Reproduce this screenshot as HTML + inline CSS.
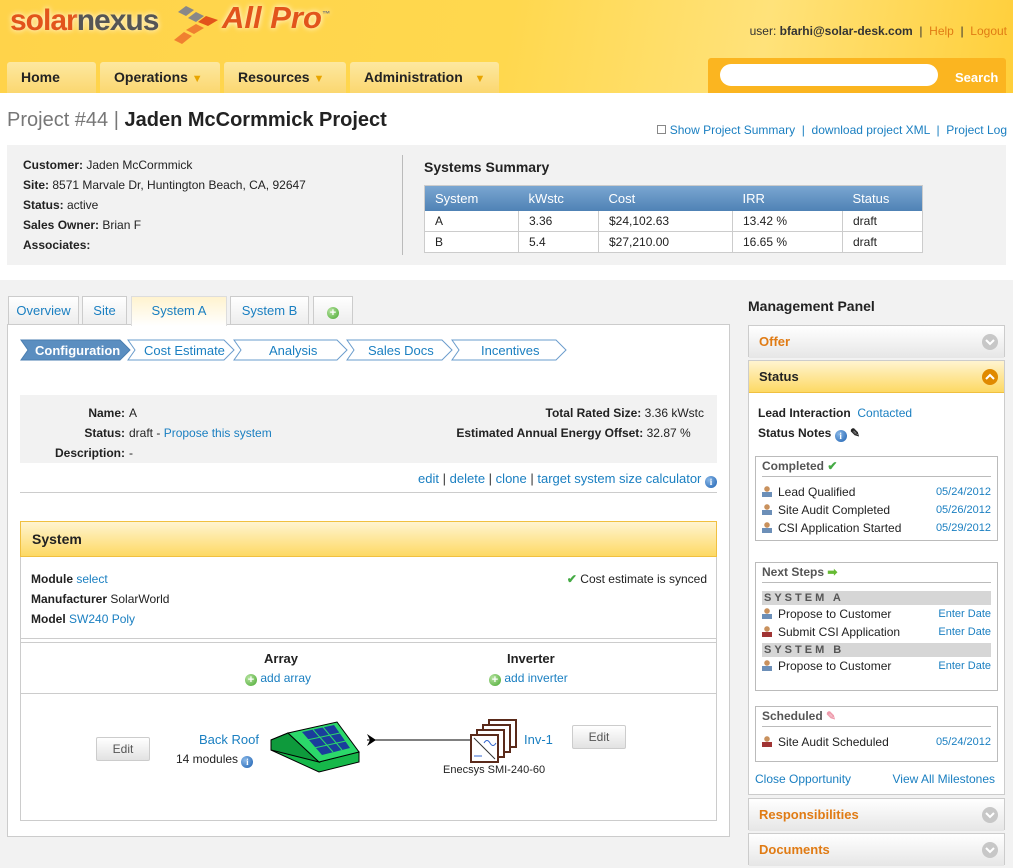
<!DOCTYPE html>
<html><head><meta charset="utf-8"><style>
*{margin:0;padding:0;box-sizing:border-box}
body{width:1013px;height:868px;overflow:hidden;background:#f2f2f2;font-family:"Liberation Sans",Arial,sans-serif;font-size:12px;color:#222;position:relative}
a{color:#1a7fc1;text-decoration:none}
.abs{position:absolute}
.hdr{left:0;top:0;width:1013px;height:93px;background:linear-gradient(100deg,#ffd34a 0%,#ffd84e 50%,#ffe27a 75%,#ffcf3a 100%)}
.nav{top:62px;height:31px;background:linear-gradient(#fde8a0,#fbd770);border-radius:3px 3px 0 0;font-weight:bold;font-size:14px;color:#222;line-height:31px;padding-left:14px}
.tri{color:#e8a500;font-size:11px}
.tab{top:296px;height:29px;border:1px solid #ccc;border-bottom:none;background:linear-gradient(#fff,#ececec);color:#1a7fc1;font-size:13px;line-height:28px;text-align:center}
.mp{left:748px;width:257px;border:1px solid #ccc}
.mph{height:32px;background:linear-gradient(#fff,#e6e6e6);font-weight:bold;font-size:13px;color:#e07b14;line-height:31px;padding-left:10px}
.circ{position:absolute;right:6px;top:8px;width:16px;height:16px;border-radius:50%;background:#c7c7c7}
.circ svg{position:absolute;left:3px;top:4px}
.box{position:absolute;left:6px;width:243px;border:1px solid #bbb;background:#fff}
.bt{margin:0 6px;border-bottom:1px solid #bbb;height:20px;line-height:19px;font-weight:bold;color:#555}
.row{height:18px;line-height:18px;padding-left:6px;position:relative;font-size:12px}
.row .d{position:absolute;right:6px;top:0;color:#1a7fc1;font-size:11px}
.p{display:inline-block;width:10px;height:11px;margin-right:6px;vertical-align:-1px;background:radial-gradient(circle at 5px 3px,#c9915d 2.5px,transparent 3px),linear-gradient(transparent 6px,#6c8fb8 6px)}
.p.r{background:radial-gradient(circle at 5px 3px,#c9915d 2.5px,transparent 3px),linear-gradient(transparent 6px,#a03434 6px)}
.sys{margin:2px 6px 0;height:14px;background:#d6d6d6;font-weight:bold;color:#555;font-size:11px;letter-spacing:3px;line-height:14px;padding-left:2px}
.info{display:inline-block;width:12px;height:12px;border-radius:50%;background:radial-gradient(circle at 4px 4px,#8ab8e8,#1a5fb0);color:#fff;font-size:9px;font-weight:bold;text-align:center;line-height:12px;vertical-align:-2px;font-family:"Liberation Serif",serif}
.plus{display:inline-block;width:12px;height:12px;border-radius:50%;background:radial-gradient(circle at 4px 4px,#b6e3a0,#47a82f);color:#fff;font-size:11px;font-weight:bold;text-align:center;line-height:12px;vertical-align:-1px}
.btn{border:1px solid #ccc;background:linear-gradient(#fff,#e2e2e2);border-radius:2px;width:54px;height:24px;text-align:center;line-height:22px;color:#555;font-size:12px}
td,th{height:21px;padding-left:10px;text-align:left;font-size:12px}
</style></head><body>
<div class="abs hdr"></div>
<div class="abs" style="left:10px;top:4px;font-size:30px;font-weight:bold;letter-spacing:-1px;color:#e2541b;text-shadow:0 0 6px #fff">solar<span style="color:#555">nexus</span></div>
<svg class="abs" style="left:168px;top:4px" width="56" height="44" viewBox="0 0 56 44"><path d="M10 8l8-6 8 4-8 6z" fill="#888"/><path d="M20 14l8-6 8 4-8 6z" fill="#888"/><path d="M30 18l8-6 12 4-10 6z" fill="#e2541b"/><path d="M18 26l10-6 8 4-10 6z" fill="#f08030"/><path d="M6 36l10-8 8 4-10 8z" fill="#f08030"/></svg>
<div class="abs" style="left:222px;top:0px;font-size:31px;font-weight:bold;font-style:italic;color:#e2541b;text-shadow:0 0 6px #fff">All Pro<sup style="font-size:8px;color:#777">™</sup></div>
<div class="abs" style="right:6px;top:24px;font-size:12px;color:#333">user: <b>bfarhi@solar-desk.com</b> &nbsp;|&nbsp; <span style="color:#e07b14">Help</span> &nbsp;|&nbsp; <span style="color:#e07b14">Logout</span></div>
<div class="abs nav" style="left:7px;width:89px">Home</div>
<div class="abs nav" style="left:100px;width:120px">Operations <span class="tri">▼</span></div>
<div class="abs nav" style="left:224px;width:122px">Resources <span class="tri">▼</span></div>
<div class="abs nav" style="left:350px;width:149px">Administration &nbsp;&nbsp;<span class="tri">▼</span></div>
<div class="abs" style="left:708px;top:58px;width:298px;height:35px;background:#fbb520;border-radius:3px 3px 0 0"></div>
<div class="abs" style="left:720px;top:64px;width:218px;height:22px;background:#fff;border-radius:11px"></div>
<div class="abs" style="left:955px;top:70px;color:#fff;font-weight:bold;font-size:13px">Search</div>
<div class="abs" style="left:0;top:93px;width:1013px;height:187px;background:#fff"></div>
<div class="abs" style="left:7px;top:109px;font-size:20px;color:#777">Project #44 | <b style="color:#222">Jaden McCormmick Project</b></div>
<div class="abs" style="right:6px;top:123px;font-size:12px;color:#1a7fc1"><span style="display:inline-block;width:9px;height:9px;border:1px solid #888;vertical-align:0"></span> Show Project Summary &nbsp;|&nbsp; download project XML &nbsp;|&nbsp; Project Log</div>
<div class="abs" style="left:7px;top:145px;width:999px;height:120px;background:#f2f2f2"></div>
<div class="abs" style="left:23px;top:155px;line-height:20px;font-size:12px"><b>Customer:</b> Jaden McCormmick<br><b>Site:</b> 8571 Marvale Dr, Huntington Beach, CA, 92647<br><b>Status:</b> active<br><b>Sales Owner:</b> Brian F<br><b>Associates:</b></div>
<div class="abs" style="left:402px;top:155px;width:1px;height:100px;background:#bbb"></div>
<div class="abs" style="left:424px;top:159px;font-weight:bold;font-size:14px">Systems Summary</div>
<table class="abs" style="left:424px;top:185px;width:499px;border-collapse:collapse;background:#fff;border:1px solid #ccc">
<tr style="background:linear-gradient(#7aa6d1,#4f82b5);color:#fff"><th style="width:94px;font-weight:normal;font-size:13px;height:25px">System</th><th style="width:80px;font-weight:normal;font-size:13px">kWstc</th><th style="width:134px;font-weight:normal;font-size:13px">Cost</th><th style="width:110px;font-weight:normal;font-size:13px">IRR</th><th style="font-weight:normal;font-size:13px">Status</th></tr>
<tr style="border-bottom:1px solid #ccc"><td style="border-right:1px solid #ccc">A</td><td style="border-right:1px solid #ccc">3.36</td><td style="border-right:1px solid #ccc">$24,102.63</td><td style="border-right:1px solid #ccc">13.42 %</td><td>draft</td></tr>
<tr><td style="border-right:1px solid #ccc">B</td><td style="border-right:1px solid #ccc">5.4</td><td style="border-right:1px solid #ccc">$27,210.00</td><td style="border-right:1px solid #ccc">16.65 %</td><td>draft</td></tr></table>

<div class="abs tab" style="left:8px;width:71px">Overview</div>
<div class="abs tab" style="left:82px;width:45px">Site</div>
<div class="abs tab" style="left:131px;width:96px;background:linear-gradient(#fff3cf,#fff);height:30px;z-index:2;border-color:#ddd">System A</div>
<div class="abs tab" style="left:230px;width:79px">System B</div>
<div class="abs tab" style="left:313px;width:40px"><span class="plus">+</span></div>
<div class="abs" style="left:7px;top:324px;width:723px;height:513px;background:#fff;border:1px solid #ccc"></div>
<svg class="abs" style="left:20px;top:339px" width="560" height="22"><polygon points="1,1 100,1 110,11 100,21 1,21 8,11" fill="#5b8ec0" stroke="#4a7eb0"/><polygon points="108,1 204,1 214,11 204,21 108,21 115,11" fill="#fff" stroke="#6a9ccc"/><polygon points="214,1 317,1 327,11 317,21 214,21 221,11" fill="#fff" stroke="#6a9ccc"/><polygon points="327,1 422,1 432,11 422,21 327,21 334,11" fill="#fff" stroke="#6a9ccc"/><polygon points="432,1 536,1 546,11 536,21 432,21 439,11" fill="#fff" stroke="#6a9ccc"/></svg>
<div class="abs" style="left:35px;top:343px;color:#fff;font-size:13px;font-weight:bold">Configuration</div>
<div class="abs" style="left:144px;top:343px;color:#1a7fc1;font-size:13px">Cost Estimate</div>
<div class="abs" style="left:269px;top:343px;color:#1a7fc1;font-size:13px">Analysis</div>
<div class="abs" style="left:368px;top:343px;color:#1a7fc1;font-size:13px">Sales Docs</div>
<div class="abs" style="left:481px;top:343px;color:#1a7fc1;font-size:13px">Incentives</div>
<div class="abs" style="left:20px;top:395px;width:697px;height:68px;background:#f2f2f2"></div>
<div class="abs" style="left:35px;top:403px;width:90px;text-align:right;line-height:20px;font-weight:bold">Name:<br>Status:<br>Description:</div>
<div class="abs" style="left:129px;top:403px;line-height:20px">A<br>draft - <a>Propose this system</a><br>-</div>
<div class="abs" style="right:309px;top:403px;line-height:20px;text-align:right"><b>Total Rated Size:</b> 3.36 kWstc<br><b>Estimated Annual Energy Offset:</b> 32.87 % &nbsp;&nbsp;&nbsp;</div>
<div class="abs" style="right:296px;top:471px;color:#1a7fc1;font-size:13px">edit <span style="color:#333">|</span> delete <span style="color:#333">|</span> clone <span style="color:#333">|</span> target system size calculator <span class="info">i</span></div>
<div class="abs" style="left:20px;top:492px;width:697px;height:1px;background:#ccc"></div>
<div class="abs" style="left:20px;top:521px;width:697px;height:300px;border:1px solid #ccc"></div>
<div class="abs" style="left:20px;top:521px;width:697px;height:36px;background:linear-gradient(#fff4d0,#fdd964);border:1px solid #f0c040;font-weight:bold;font-size:14px;line-height:34px;padding-left:11px">System</div>
<div class="abs" style="left:31px;top:569px;line-height:20px"><b>Module</b> <a>select</a><br><b>Manufacturer</b> SolarWorld<br><b>Model</b> <a>SW240 Poly</a></div>
<div class="abs" style="right:306px;top:569px;line-height:20px"><span style="color:#4a4;font-weight:bold">✔</span> Cost estimate is synced</div>
<div class="abs" style="left:21px;top:638px;width:695px;height:5px;border-top:1px solid #ccc;border-bottom:1px solid #ccc"></div>
<div class="abs" style="left:264px;top:651px;font-weight:bold;font-size:13px">Array</div>
<div class="abs" style="left:245px;top:671px"><span class="plus">+</span> <a>add array</a></div>
<div class="abs" style="left:507px;top:651px;font-weight:bold;font-size:13px">Inverter</div>
<div class="abs" style="left:489px;top:671px"><span class="plus">+</span> <a>add inverter</a></div>
<div class="abs" style="left:21px;top:693px;width:695px;height:1px;background:#ccc"></div>
<div class="abs btn" style="left:96px;top:737px">Edit</div>
<div class="abs btn" style="left:572px;top:725px">Edit</div>
<div class="abs" style="left:199px;top:732px;color:#1a7fc1;font-size:13px">Back Roof</div>
<div class="abs" style="left:176px;top:752px">14 modules <span class="info">i</span></div>
<svg class="abs" style="left:270px;top:700px" width="300" height="80">
<polygon points="1,40 18,33 49,62 89,52 89,62 49,72 1,50" fill="#16b84a" stroke="#000"/>
<polygon points="1,40 18,33 49,62 1,50" fill="#0e9a3c" stroke="#000"/>
<polygon points="18,33 67,22 89,52 49,62" fill="#2bd86a" stroke="#000"/>
<polygon points="32,32 64,25 80,48 52,55" fill="#1a3d9c"/>
<path d="M43,29.5 L63,52 M53,27 L72,50 M37,40 L70,33 M44,48 L76,41" stroke="#2bd86a" stroke-width="1"/>
<line x1="97" y1="40" x2="200" y2="40" stroke="#000"/><polygon points="97,34 106,40 97,46 100,40" fill="#000"/>
<rect x="219" y="20" width="27" height="27" fill="#fff" stroke="#5a2a1a" stroke-width="2"/><rect x="213" y="25" width="27" height="27" fill="#fff" stroke="#5a2a1a" stroke-width="2"/><rect x="207" y="30" width="27" height="27" fill="#fff" stroke="#5a2a1a" stroke-width="2"/><rect x="201" y="35" width="27" height="27" fill="#fff" stroke="#5a2a1a" stroke-width="2"/><line x1="204" y1="38" x2="225" y2="59" stroke="#333"/><path d="M214 43q3-5 6 0t6 0" stroke="#36c" fill="none"/><line x1="204" y1="56" x2="212" y2="56" stroke="#36c"/></svg>
<div class="abs" style="left:524px;top:732px;color:#1a7fc1;font-size:13px">Inv-1</div>
<div class="abs" style="left:443px;top:764px;font-size:11px">Enecsys SMI-240-60</div>

<div class="abs" style="left:748px;top:298px;font-weight:bold;font-size:14px">Management Panel</div>
<div class="abs mp" style="top:325px;height:32px"><div class="mph">Offer</div><div class="circ"><svg width="10" height="8"><path d="M1 2l4 4 4-4" stroke="#fff" stroke-width="2" fill="none"/></svg></div></div>
<div class="abs mp" style="top:360px;height:435px;background:#fff">
<div class="mph" style="background:linear-gradient(#fff4d0,#fdd964);color:#222;border-bottom:1px solid #f0c040">Status</div><div class="circ" style="background:#e08a00"><svg width="10" height="8"><path d="M1 6l4-4 4 4" stroke="#fff" stroke-width="2" fill="none"/></svg></div>
<div class="abs" style="left:9px;top:42px;line-height:20px;font-weight:bold">Lead Interaction &nbsp;<a style="font-weight:normal">Contacted</a><br>Status Notes <span class="info">i</span> ✎</div>
<div class="box" style="top:95px;height:85px"><div class="bt">Completed <span style="color:#4a4">✔</span></div><div style="height:6px"></div><div class="row"><span class="p"></span>Lead Qualified<span class="d">05/24/2012</span></div><div class="row"><span class="p"></span>Site Audit Completed<span class="d">05/26/2012</span></div><div class="row"><span class="p"></span>CSI Application Started<span class="d">05/29/2012</span></div></div>
<div class="box" style="top:201px;height:129px"><div class="bt">Next Steps <span style="color:#6b3">➡</span></div><div style="height:6px"></div><div class="sys">SYSTEM A</div><div class="row"><span class="p"></span>Propose to Customer<span class="d">Enter Date</span></div><div class="row"><span class="p r"></span>Submit CSI Application<span class="d">Enter Date</span></div><div class="sys">SYSTEM B</div><div class="row"><span class="p"></span>Propose to Customer<span class="d">Enter Date</span></div></div>
<div class="box" style="top:345px;height:56px"><div class="bt">Scheduled <span style="color:#e9a">✎</span></div><div style="height:6px"></div><div class="row"><span class="p r"></span>Site Audit Scheduled<span class="d">05/24/2012</span></div></div>
<div class="abs" style="left:6px;top:411px;color:#1a7fc1">Close Opportunity</div><div class="abs" style="right:9px;top:411px;color:#1a7fc1">View All Milestones</div>
</div>
<div class="abs mp" style="top:798px;height:32px"><div class="mph">Responsibilities</div><div class="circ"><svg width="10" height="8"><path d="M1 2l4 4 4-4" stroke="#fff" stroke-width="2" fill="none"/></svg></div></div>
<div class="abs mp" style="top:833px;height:32px"><div class="mph">Documents</div><div class="circ"><svg width="10" height="8"><path d="M1 2l4 4 4-4" stroke="#fff" stroke-width="2" fill="none"/></svg></div></div>
</body></html>
